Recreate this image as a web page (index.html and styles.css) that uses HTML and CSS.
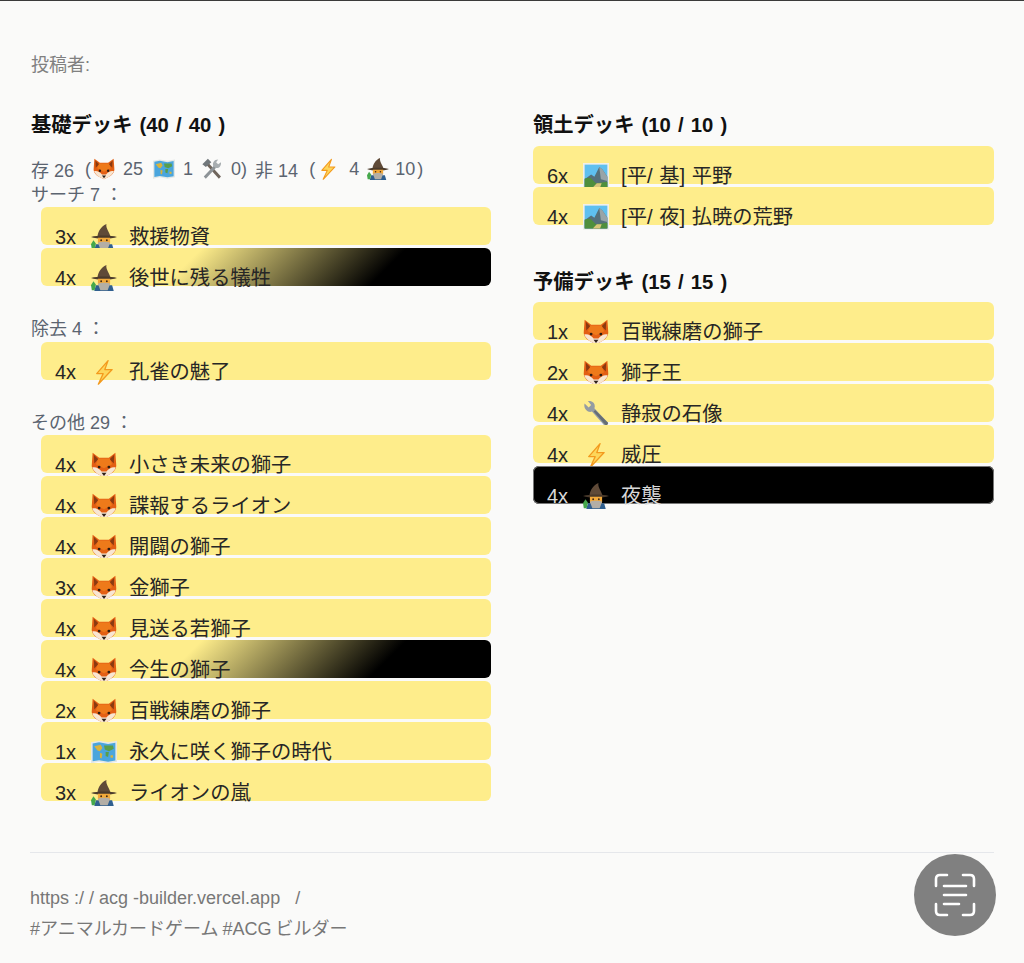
FILE: index.html
```html
<!DOCTYPE html>
<html lang="ja">
<head>
<meta charset="utf-8">
<title>デッキ</title>
<link rel="stylesheet" href="styles.css">
</head>
<body>
<svg class="defs" width="0" height="0" aria-hidden="true">
  <symbol id="fox" viewBox="0 0 32 32">
    <path d="M2 1 L10 7 H22 L30 1 L31 15 C32 21 27 26 21 28.5 L16 31 L11 28.5 C5 26 0 21 1 15 Z" fill="#e35f14"/>
    <path d="M3.5 3.5 L9 9 L4 14 Z M28.5 3.5 L23 9 L28 14 Z" fill="#8a3a10"/>
    <path d="M9 8 H23 L26 15 L16 20 L6 15 Z" fill="#ee7a1a"/>
    <path d="M1.5 19 C6 18 10 20 13 24 H19 C22 20 26 18 30.5 19 C29 23 25 27 21 28.5 L16 31 L11 28.5 C7 27 3 23 1.5 19 Z" fill="#f8e6d2"/>
    <circle cx="10" cy="18.5" r="1.7" fill="#2f1c10"/><circle cx="22" cy="18.5" r="1.7" fill="#2f1c10"/>
    <path d="M13 25.5 H19 L16 29.5 Z" fill="#2d2018"/>
  </symbol>
  <symbol id="wizard" viewBox="0 0 32 32">
    <path d="M8 15 C9 9 12 3 19 0 C18 5 22 9 24 15 Z" fill="#5f4a38"/>
    <path d="M0 16 C8 13.5 24 13.5 32 16 C25 19 7 19 0 16 Z" fill="#4a3a2b"/>
    <path d="M8.5 17 H23.5 V23 C23.5 26 20 28 16 28 C12 28 8.5 26 8.5 23 Z" fill="#f2a93a"/>
    <circle cx="12.5" cy="20" r="1.1" fill="#3a2415"/><circle cx="19.5" cy="20" r="1.1" fill="#3a2415"/>
    <path d="M6 25 H26 L28 32 H4 Z" fill="#2f5f8f"/>
    <path d="M8.5 23 C12 21.5 20 21.5 23.5 23 L20.5 31 H11.5 Z" fill="#b3aea6"/>
    <path d="M0 25 L3 20 L6 24 L4.5 31 H1 Z" fill="#45a84b"/>
  </symbol>
  <symbol id="map" viewBox="0 0 32 32">
    <path d="M0 4 L10 2 L21 4 L32 2 V28 L21 30 L10 28 L0 30 Z" fill="#e3e8e6"/>
    <path d="M2 5.5 L10 4 L21 6 L30 4.5 V26.5 L21 28 L10 26 L2 27.5 Z" fill="#4aa5dd"/>
    <path d="M4 9 L12 7 L14 11 L11 15 L8 14 Z M11 17 L14 18 L13 24 L11 23 Z" fill="#d9b43c"/>
    <path d="M16 8 L27 8 L28 12 L22 15 L17 13 Z M18 16 L22 16 L21 22 L18 21 Z" fill="#5a9e4a"/>
    <path d="M24 20 L27 20 L27 23 L24 23 Z" fill="#d9b43c"/>
  </symbol>
  <symbol id="tools" viewBox="0 0 32 32">
    <path d="M6 8 L9 5 L29 27 L26 30 Z" fill="#6f655c"/>
    <path d="M2 9 L10 1 L15 6 L7 13 Z" fill="#70777b"/>
    <path d="M4 27 L19 11 L22 14 L7 30 Z" fill="#8d9397"/>
    <path d="M18 12 C16 7 19 2 25 2 L22 6 L25 9 L29 6 C30 12 25 16 21 14 Z" fill="#a8aeb1"/>
  </symbol>
  <symbol id="bolt" viewBox="0 0 32 32">
    <path d="M21 2 L7 18 H15 L9 31 L26 13 H17 Z" fill="#fdd65a" stroke="#f39a1e" stroke-width="1.6" stroke-linejoin="round"/>
  </symbol>
  <symbol id="land" viewBox="0 0 32 32">
    <rect width="32" height="32" fill="#f0f0ec"/>
    <rect x="2" y="2" width="28" height="28" fill="#5fc0ef"/>
    <path d="M2 20 L10 14 L14 17 L20 5 L24 8 L30 17 V30 H2 Z" fill="#55707a"/>
    <path d="M20 5 L24 8 L30 17 V22 L22 20 Z" fill="#98a4a8"/>
    <path d="M2 19 L9 18 L16 25 L30 23 V30 H2 Z" fill="#4f8f3c"/>
    <path d="M12 30 L17 25 L23 25 L21 30 Z" fill="#d9c67a"/>
  </symbol>
  <symbol id="wrench" viewBox="0 0 32 32">
    <path d="M2 3 L7 8 L10 5 L6 0 C12 -1 16 4 14 9 L31 27 L28 32 L11 13 C6 15 0 9 2 3 Z" fill="#949ca3"/>
    <path d="M13 13 L29 31 L31 27 L15 11 Z" fill="#666e75"/>
  </symbol>
</svg>

<main class="page">
  <p class="author">投稿者:</p>

  <div class="columns">
    <section class="col">
      <h2 class="deck-title nudge">基礎デッキ (40 / 40 )</h2>
      <div class="stats nudge">
        <span>存 26</span>
        <span class="wide">(</span>
        <svg class="mini tight"><use href="#fox"/></svg>
        <span>25</span>
        <svg class="mini wide2"><use href="#map"/></svg>
        <span>1</span>
        <svg class="mini"><use href="#tools"/></svg>
        <span>0)</span>
        <span>非 14</span>
        <span class="wide">(</span>
        <svg class="mini tight"><use href="#bolt"/></svg>
        <span class="wide2">4</span>
        <svg class="mini"><use href="#wizard"/></svg>
        <span class="narrow">10</span>
        <span class="tight">)</span>
      </div>

      <h3 class="group-title nudge">サーチ 7 ：</h3>
      <ul class="rows inset">
        <li class="row"><span class="count">3x</span><svg class="icon"><use href="#wizard"/></svg><span class="name">救援物資</span></li>
        <li class="row fade"><span class="count">4x</span><svg class="icon"><use href="#wizard"/></svg><span class="name">後世に残る犠牲</span></li>
      </ul>

      <h3 class="group-title nudge spaced extra">除去 4 ：</h3>
      <ul class="rows inset">
        <li class="row"><span class="count">4x</span><svg class="icon"><use href="#bolt"/></svg><span class="name">孔雀の魅了</span></li>
      </ul>

      <h3 class="group-title nudge spaced">その他 29 ：</h3>
      <ul class="rows inset">
        <li class="row"><span class="count">4x</span><svg class="icon"><use href="#fox"/></svg><span class="name">小さき未来の獅子</span></li>
        <li class="row"><span class="count">4x</span><svg class="icon"><use href="#fox"/></svg><span class="name">諜報するライオン</span></li>
        <li class="row"><span class="count">4x</span><svg class="icon"><use href="#fox"/></svg><span class="name">開闢の獅子</span></li>
        <li class="row"><span class="count">3x</span><svg class="icon"><use href="#fox"/></svg><span class="name">金獅子</span></li>
        <li class="row"><span class="count">4x</span><svg class="icon"><use href="#fox"/></svg><span class="name">見送る若獅子</span></li>
        <li class="row fade"><span class="count">4x</span><svg class="icon"><use href="#fox"/></svg><span class="name">今生の獅子</span></li>
        <li class="row"><span class="count">2x</span><svg class="icon"><use href="#fox"/></svg><span class="name">百戦練磨の獅子</span></li>
        <li class="row"><span class="count">1x</span><svg class="icon"><use href="#map"/></svg><span class="name">永久に咲く獅子の時代</span></li>
        <li class="row"><span class="count">3x</span><svg class="icon"><use href="#wizard"/></svg><span class="name">ライオンの嵐</span></li>
      </ul>
    </section>

    <section class="col">
      <h2 class="deck-title">領土デッキ (10 / 10 )</h2>
      <ul class="rows after-title">
        <li class="row"><span class="count">6x</span><svg class="icon"><use href="#land"/></svg><span class="name">[平/ 基] 平野</span></li>
        <li class="row"><span class="count">4x</span><svg class="icon"><use href="#land"/></svg><span class="name">[平/ 夜] 払暁の荒野</span></li>
      </ul>

      <h2 class="deck-title second">予備デッキ (15 / 15 )</h2>
      <ul class="rows after-title">
        <li class="row"><span class="count">1x</span><svg class="icon"><use href="#fox"/></svg><span class="name">百戦練磨の獅子</span></li>
        <li class="row"><span class="count">2x</span><svg class="icon"><use href="#fox"/></svg><span class="name">獅子王</span></li>
        <li class="row"><span class="count">4x</span><svg class="icon"><use href="#wrench"/></svg><span class="name">静寂の石像</span></li>
        <li class="row"><span class="count">4x</span><svg class="icon"><use href="#bolt"/></svg><span class="name">威圧</span></li>
        <li class="row dark"><span class="count">4x</span><svg class="icon"><use href="#wizard"/></svg><span class="name">夜襲</span></li>
      </ul>
    </section>
  </div>

  <footer class="footer">
    <div class="footer-text">
      <p>https :/ / acg -builder.vercel.app &nbsp; /</p>
      <p class="tags">#アニマルカードゲーム #ACG ビルダー</p>
    </div>
    <button class="scan" type="button" aria-label="スキャン">
      <svg viewBox="0 0 44 44" width="44" height="44" fill="none" stroke="#fff" stroke-width="2.6" stroke-linecap="round">
        <path d="M3 13 V6 Q3 2 7 2 H14"/>
        <path d="M30 2 H37 Q41 2 41 6 V13"/>
        <path d="M3 31 V38 Q3 42 7 42 H14"/>
        <path d="M30 42 H37 Q41 42 41 38 V31"/>
        <path d="M11 13 H33 M11 22 H33 M11 31 H26"/>
      </svg>
    </button>
  </footer>
</main>
</body>
</html>
```

FILE: styles.css
```css
* { box-sizing: border-box; }
html, body { margin: 0; padding: 0; }
body {
  background: #fafaf9;
  font-family: "Liberation Sans", "Noto Sans CJK JP", sans-serif;
  color: #1f2937;
}
.defs { position: absolute; }
.page {
  height: 963px;
  overflow: hidden;
  border-top: 1px solid #3a3a3a;
  padding: 51px 30px 0;
}
.author {
  margin: 0;
  padding-left: 1px;
  font-size: 18px;
  line-height: 26px;
  color: #808080;
}
.columns {
  display: grid;
  grid-template-columns: 462px 461px;
  column-gap: 41px;
  margin-top: 33px;
  height: 741px;
}
.nudge { padding-left: 1px; }
.deck-title {
  margin: 0;
  font-size: 20.3px;
  word-spacing: 1.5px;
  line-height: 28px;
  font-weight: 700;
  color: #111;
}
.deck-title.second { margin-top: 43px; margin-bottom: -1px; }
.stats {
  display: flex;
  align-items: center;
  gap: 8px;
  margin-top: 16px;
  height: 28px;
  font-size: 18px;
  color: #5b6470;
  white-space: nowrap;
}
.mini { width: 22px; height: 22px; flex: none; }
.wide { margin-left: 3px; }
.wide2 { margin-left: 2px; }
.tight { margin-left: -6px; }
.narrow { margin-left: -2px; }
.group-title {
  margin: 0;
  font-size: 18px;
  line-height: 24px;
  font-weight: 400;
  color: #5b6470;
}
.group-title.spaced { margin-top: 31px; }
.group-title.extra { margin-bottom: 1px; }
.rows {
  list-style: none;
  margin: 0;
  padding: 0;
  display: flex;
  flex-direction: column;
  gap: 3px;
}
.rows.inset { margin-left: 11px; margin-right: 1px; }
.rows.after-title { margin-top: 7px; }
.row {
  display: flex;
  align-items: flex-start;
  height: 38px;
  padding: 16px 0 0 14px;
  background: #feed8b;
  border-radius: 6px;
  font-size: 20px;
  line-height: 28px;
  color: #262626;
}
.row.fade {
  background: linear-gradient(135deg, #feed8b 33%, #000 75%);
}
.row.dark {
  background: #000;
  color: #d8d8d8;
  box-shadow: 0 0 0 1px #777 inset;
}
.count { width: 36px; flex: none; }
.icon { width: 26px; height: 26px; flex: none; margin-top: 1px; }
.name { margin-left: 12px; font-size: 20.3px; word-spacing: 1px; white-space: nowrap; }
.footer {
  position: relative;
  border-top: 1px solid #e5e7eb;
  padding-top: 33px;
}
.footer-text p {
  margin: 0 0 7px;
  font-size: 18px;
  line-height: 24px;
  color: #777;
}
.footer-text .tags { word-spacing: -1px; }
.scan {
  position: absolute;
  top: 1px;
  right: -2px;
  width: 82px;
  height: 82px;
  border: 0;
  padding: 0;
  border-radius: 50%;
  background: #808080;
  display: flex;
  align-items: center;
  justify-content: center;
}
```
